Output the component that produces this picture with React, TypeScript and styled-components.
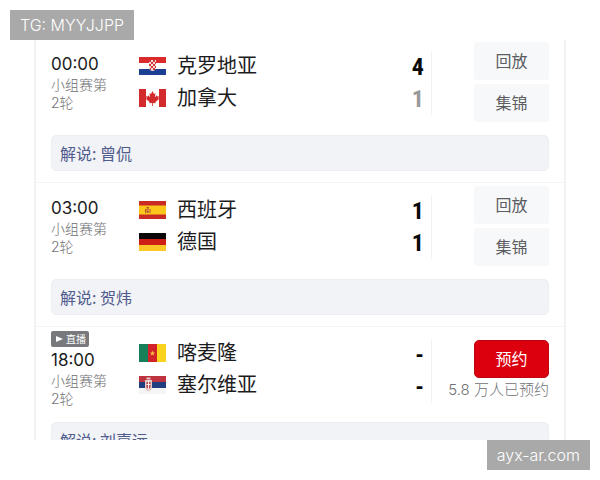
import React from "react";
import styled, { createGlobalStyle } from "styled-components";

const GlobalStyle = createGlobalStyle`
  *, *::before, *::after { box-sizing: border-box; }
  body {
    margin: 0;
    background: #ffffff;
    color: #1c1c1e;
    font-family: Inter, "Noto Sans CJK SC", sans-serif;
  }
`;

const Page = styled.div`
  position: relative;
  display: flex;
  flex-direction: column;
  height: 100vh;
  padding: 40px 34px;
`;

const Schedule = styled.main`
  flex: 1;
  min-height: 0;
  overflow: hidden;
  border: solid #f1f2f4;
  border-width: 0 2px;
`;

const Match = styled.article`
  padding: 3px 15px 11px;
  border-bottom: 1px solid #f3f4f6;

  &:first-child {
    padding-top: 2px;
  }
`;

const Summary = styled.div<{ $live?: boolean }>`
  display: grid;
  grid-template-columns: 88px 1fr auto 117px;
  height: ${(p) => (p.$live ? 92 : 93)}px;
`;

const Kickoff = styled.div<{ $live?: boolean }>`
  display: flex;
  flex-direction: column;
  align-items: flex-start;
  padding-top: ${(p) => (p.$live ? 1 : 10)}px;
`;

const LiveBadge = styled.span`
  display: flex;
  align-items: center;
  gap: 3px;
  height: 16px;
  padding: 0 3px 0 5px;
  margin-bottom: 1px;
  border-radius: 2px;
  background: #77797c;
  color: #ffffff;
  font-size: 10px;
  line-height: 16px;
`;

const Time = styled.time`
  font-size: 17px;
  line-height: 24px;
`;

const Stage = styled.span`
  width: 56px;
  color: #6f7072;
  font-size: 14px;
  font-weight: 300;
  line-height: 18px;
`;

const Teams = styled.div<{ $live?: boolean }>`
  display: flex;
  flex-direction: column;
  padding-top: ${(p) => (p.$live ? 6 : 7)}px;
`;

const Team = styled.div`
  display: flex;
  align-items: center;
  gap: 11px;
  height: 32px;
  font-family: "Noto Sans CJK SC", sans-serif;
  font-size: 20px;
  line-height: 32px;
  white-space: nowrap;

  svg {
    flex: none;
    margin-top: 1px;
  }
`;

const Scores = styled.div`
  align-self: start;
  margin-top: 9px;
  padding-right: 7px;
  border-right: 1px solid #eff0f2;
`;

const Score = styled.div<{ $muted?: boolean }>`
  height: 32px;
  color: ${(p) => (p.$muted ? "#98999b" : "#0a0a0a")};
  font-family: "Liberation Sans Narrow", "Roboto Condensed", Roboto, sans-serif;
  font-size: 24px;
  font-weight: 700;
  line-height: 32px;
  text-align: right;
`;

const Actions = styled.div<{ $booking?: boolean }>`
  display: flex;
  flex-direction: column;
  align-items: flex-end;
  gap: ${(p) => (p.$booking ? 2 : 4)}px;
  padding-top: ${(p) => (p.$booking ? 10 : 0)}px;
`;

const ActionButton = styled.button<{ $primary?: boolean }>`
  width: 75px;
  height: 38px;
  padding: 0 0 2px;
  border: ${(p) => (p.$primary ? "1px solid #c00512" : "0")};
  border-radius: ${(p) => (p.$primary ? 5 : 3)}px;
  background: ${(p) => (p.$primary ? "#dc000f" : "#f7f8f9")};
  color: ${(p) => (p.$primary ? "#ffffff" : "#5b5c5f")};
  font-family: "Noto Sans CJK SC", sans-serif;
  font-size: 16px;
  line-height: 24px;
  cursor: pointer;
`;

const BookingCount = styled.span`
  color: #6f7073;
  font-size: 15px;
  font-weight: 300;
  line-height: 20px;
  white-space: nowrap;
`;

const Commentary = styled.p`
  height: 36px;
  margin: 0;
  padding: 0 8px;
  border: 1px solid #eceef1;
  border-radius: 5px;
  background: #f1f3f6;
  color: #515c8e;
  font-family: "Noto Sans CJK SC", sans-serif;
  font-size: 16px;
  line-height: 34px;
`;

const Tag = styled.span<{ $corner: "top" | "bottom" }>`
  position: absolute;
  ${(p) => (p.$corner === "top" ? "top: 10px; left: 10px;" : "right: 10px; bottom: 10px;")}
  padding: 0 10px;
  background: #a9a9a9;
  color: #ffffff;
  font-size: 16px;
  font-weight: 300;
  line-height: 30px;
  white-space: nowrap;
`;

type Country = "hr" | "ca" | "es" | "de" | "cm" | "rs";

const flagArt: Record<Country, React.ReactNode> = {
  hr: (
    <>
      <path fill="#fff" d="M0 0h27v18H0z" />
      <path fill="#d92b2b" d="M0 0h27v6H0z" />
      <path fill="#1c3f94" d="M0 12h27v6H0z" />
      <path fill="#f4dada" d="M10 3h7v8q-1 3-3.500 3T10 11z" />
      <path
        fill="#d43a3a"
        d="M10 3h2v2h-2zM14 3h2v2h-2zM12 5h2v2h-2zM16 5h1v2h-1zM10 7h2v2h-2zM14 7h2v2h-2zM12 9h2v2h-2zM16 9h1v2h-1zM11 11h1v2h-1zM14 11h2v2h-2z"
      />
    </>
  ),
  ca: (
    <>
      <path fill="#fff" d="M0 0h27v18H0z" />
      <path fill="#d32a2e" d="M0 0h7v18H0zM20 0h7v18h-7z" />
      <path
        fill="#d32a2e"
        d="M13.500 2l1.500 3 1.500-.8-.6 4 2-2 .4 1.300 1.700-.2-.7 2 .8.700-3.700 3 .3 1.300-2.800-.4V17h-.8v-3.100l-2.800.4.3-1.300-3.700-3 .8-.7-.7-2 1.700.2.400-1.300 2 2-.6-4 1.500.8z"
      />
    </>
  ),
  es: (
    <>
      <path fill="#c92a24" d="M0 0h27v18H0z" />
      <path fill="#fbc51b" d="M0 4.500h27v9H0z" />
      <path fill="#b4562a" d="M6 8h1v4H6zM10.500 8h1v4h-1zM7.500 7.500H10v3q-.3 1.500-1.300 1.500T7.500 10.500zM7.500 6h2.500v1H7.500z" />
      <path fill="#eaa36a" d="M8.500 8.500h1.500v1.500H8.500z" />
    </>
  ),
  de: (
    <>
      <path fill="#0b0607" d="M0 0h27v6H0z" />
      <path fill="#cf2018" d="M0 6h27v6H0z" />
      <path fill="#fbc827" d="M0 12h27v6H0z" />
    </>
  ),
  cm: (
    <>
      <path fill="#178059" d="M0 0h9v18H0z" />
      <path fill="#d3232a" d="M9 0h9v18H9z" />
      <path fill="#fbd31f" d="M18 0h9v18h-9z" />
      <path fill="#f6c23c" d="M13.500 6.500l.7 1.900h2l-1.600 1.200.6 2-1.700-1.200-1.700 1.200.6-2-1.600-1.200h2z" />
    </>
  ),
  rs: (
    <>
      <path fill="#bd3440" d="M0 0h27v6H0z" />
      <path fill="#213f80" d="M0 6h27v6H0z" />
      <path fill="#f5f5f6" d="M0 12h27v6H0z" />
      <path fill="#e5c7c4" d="M7.500 1.500h4v2h-4zM6 4h7v8q-1 3-3.500 3.500Q7 15 6 12z" />
      <path fill="#b9444b" d="M7.500 6h4v5.500l-2 1.500-2-1.500z" />
      <path fill="#f5efef" d="M9 4.500h1v9H9zM7.500 8h4v1h-4z" />
    </>
  ),
};

function Flag({ country }: { country: Country }) {
  return (
    <svg width="27" height="18" viewBox="0 0 27 18" aria-hidden="true">
      {flagArt[country]}
    </svg>
  );
}

interface MatchData {
  time: string;
  live?: boolean;
  teams: { country: Country; name: string; score: string; muted?: boolean }[];
  booking?: string;
  commentators: string;
}

const matches: MatchData[] = [
  {
    time: "00:00",
    teams: [
      { country: "hr", name: "克罗地亚", score: "4" },
      { country: "ca", name: "加拿大", score: "1", muted: true },
    ],
    commentators: "曾侃",
  },
  {
    time: "03:00",
    teams: [
      { country: "es", name: "西班牙", score: "1" },
      { country: "de", name: "德国", score: "1" },
    ],
    commentators: "贺炜",
  },
  {
    time: "18:00",
    live: true,
    teams: [
      { country: "cm", name: "喀麦隆", score: "-" },
      { country: "rs", name: "塞尔维亚", score: "-" },
    ],
    booking: "5.8 万人已预约",
    commentators: "刘嘉远",
  },
];

function MatchRow({ match }: { match: MatchData }) {
  return (
    <Match>
      <Summary $live={match.live}>
        <Kickoff $live={match.live}>
          {match.live && (
            <LiveBadge>
              <svg width="7" height="8" viewBox="0 0 7 8" aria-hidden="true">
                <path d="M0 1l7 3-7 3z" fill="#fff" />
              </svg>
              直播
            </LiveBadge>
          )}
          <Time>{match.time}</Time>
          <Stage>小组赛第2轮</Stage>
        </Kickoff>
        <Teams $live={match.live}>
          {match.teams.map((team) => (
            <Team key={team.country}>
              <Flag country={team.country} />
              {team.name}
            </Team>
          ))}
        </Teams>
        <Scores>
          {match.teams.map((team) => (
            <Score key={team.country} $muted={team.muted}>
              {team.score}
            </Score>
          ))}
        </Scores>
        {match.booking ? (
          <Actions $booking>
            <ActionButton type="button" $primary>
              预约
            </ActionButton>
            <BookingCount>{match.booking}</BookingCount>
          </Actions>
        ) : (
          <Actions>
            <ActionButton type="button">回放</ActionButton>
            <ActionButton type="button">集锦</ActionButton>
          </Actions>
        )}
      </Summary>
      <Commentary>解说: {match.commentators}</Commentary>
    </Match>
  );
}

export default function App() {
  return (
    <>
      <GlobalStyle />
      <Page>
        <Schedule>
          {matches.map((match) => (
            <MatchRow key={match.time} match={match} />
          ))}
        </Schedule>
        <Tag $corner="top">TG: MYYJJPP</Tag>
        <Tag $corner="bottom">ayx-ar.com</Tag>
      </Page>
    </>
  );
}
